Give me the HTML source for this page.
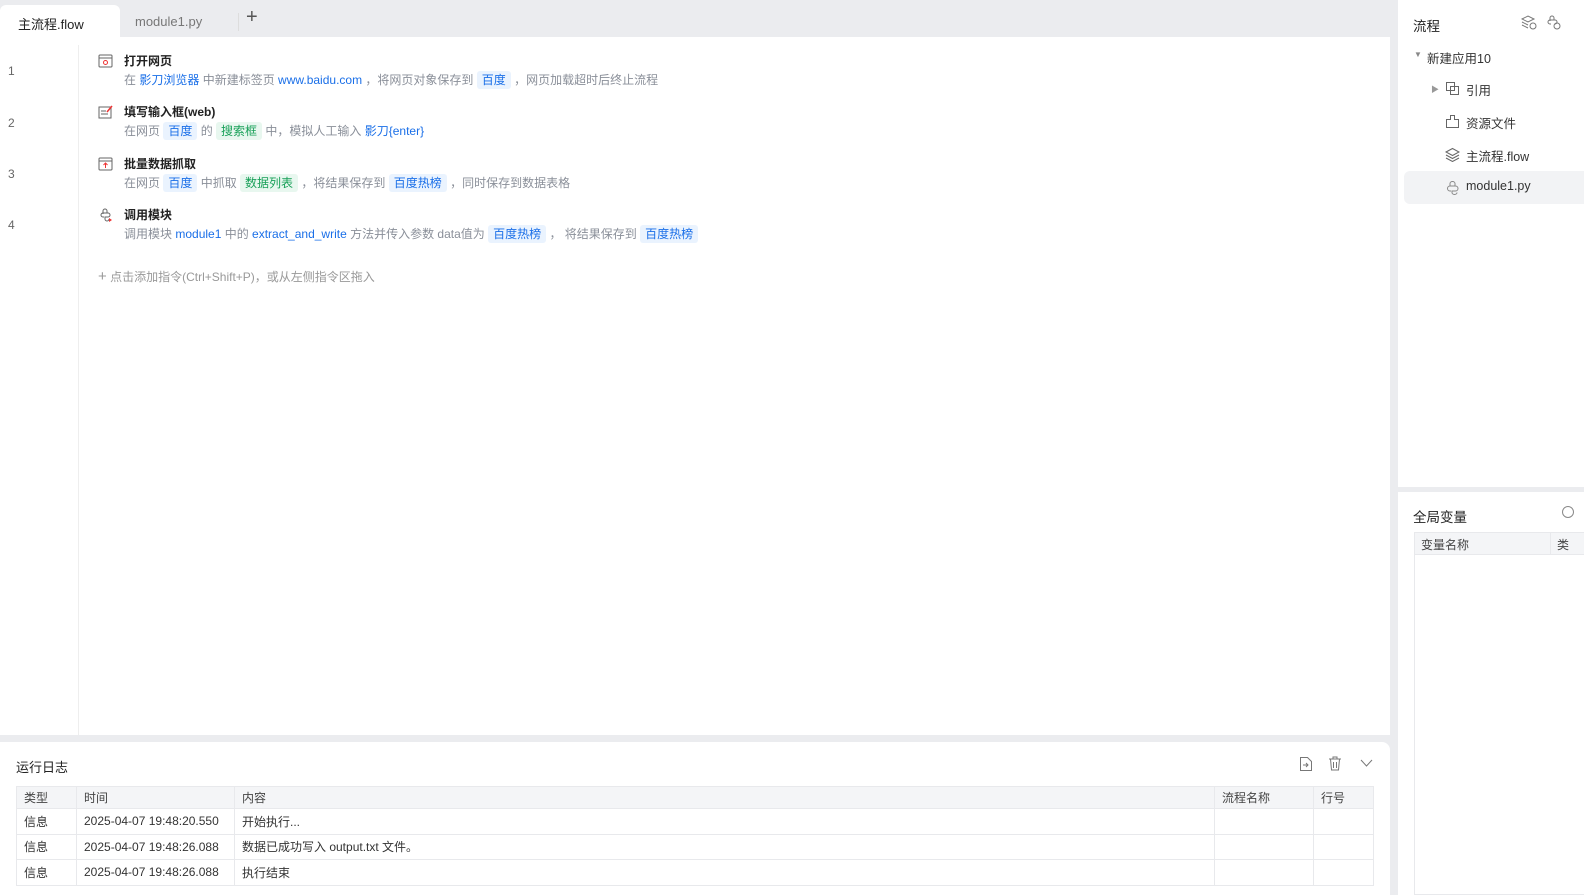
<!DOCTYPE html>
<html><head><meta charset="utf-8"><style>
*{margin:0;padding:0;box-sizing:border-box}
body{width:1584px;height:895px;overflow:hidden;background:#ebecef;font-family:"Liberation Sans","Noto Sans CJK SC",sans-serif;font-size:12px;color:#222;position:relative}
.abs{position:absolute}
.tab1{left:0;top:5px;width:120px;height:33px;background:#fff;border-radius:6px 6px 0 0;padding:9px 0 0 18px;font-size:13px;color:#222}
.tab2{left:135px;top:14px;font-size:13px;color:#777}
.editor{left:0;top:37px;width:1390px;height:698px;background:#fff}
.gutter{left:78px;top:45px;width:1px;height:690px;background:#eee}
.ln{left:8px;color:#666;font-size:12px}
.t{left:124px;font-size:12px;font-weight:bold;color:#222}
.d{left:124px;font-size:12px;color:#8a8f99;white-space:nowrap}
.b{color:#1a6fe8}
.tag{display:inline-block;padding:0 5px;border-radius:3px;background:#eaf3fe;color:#1a6fe8;line-height:18px}
.tg{background:#e8f7ef;color:#18a058}
.ic{left:98px;width:15px;height:14px}
.log{left:0;top:742px;width:1390px;height:153px;background:#fff;border-radius:0 8px 0 0}
table{border-collapse:collapse;font-size:12px}
td{border:1px solid #e8e9ec;height:25.5px;padding:0 7px;color:#333}
tr.h td{background:#f4f5f7;height:22px;color:#444}
.rp{left:1398px;top:0;width:186px;height:487px;background:#fff}
.rp2{left:1398px;top:492px;width:186px;height:403px;background:#fff}
.tr{font-size:12.5px;color:#333}
</style></head><body>
<div class="abs tab1">主流程.flow</div>
<div class="abs tab2">module1.py</div>
<div class="abs" style="left:238px;top:13px;width:1px;height:18px;background:#ddd"></div>
<div class="abs" style="left:246px;top:6px;font-size:20px;color:#555;font-weight:300">+</div>
<div class="abs editor"></div>
<div class="abs gutter"></div>
<div class="abs ln" style="top:64px">1</div>
<div class="abs ln" style="top:116px">2</div>
<div class="abs ln" style="top:167px">3</div>
<div class="abs ln" style="top:218px">4</div>

<svg class="abs ic" style="top:54px" viewBox="0 0 15 14"><rect x="1" y="1" width="13" height="12" rx="1" fill="none" stroke="#666"/><line x1="1" y1="4" x2="14" y2="4" stroke="#666"/><circle cx="7.5" cy="8.5" r="2" fill="none" stroke="#e33"/></svg>
<div class="abs t" style="top:52px">打开网页</div>
<div class="abs d" style="top:71px">在 <span class="b">影刀浏览器</span> 中新建标签页 <span class="b">www.baidu.com</span> ，将网页对象保存到 <span class="tag">百度</span> ，网页加载超时后终止流程</div>

<svg class="abs ic" style="top:105px" viewBox="0 0 15 14"><rect x="1" y="2" width="12" height="11" fill="none" stroke="#666"/><line x1="3" y1="6" x2="8" y2="6" stroke="#666"/><line x1="3" y1="9" x2="10" y2="9" stroke="#666"/><line x1="9" y1="7" x2="14" y2="1" stroke="#e33" stroke-width="1.5"/></svg>
<div class="abs t" style="top:103px">填写输入框(web)</div>
<div class="abs d" style="top:122px">在网页 <span class="tag">百度</span> 的 <span class="tag tg">搜索框</span> 中，模拟人工输入 <span class="b">影刀{enter}</span></div>

<svg class="abs ic" style="top:157px" viewBox="0 0 15 14"><rect x="1" y="1" width="13" height="12" rx="1" fill="none" stroke="#666"/><line x1="1" y1="4" x2="14" y2="4" stroke="#666"/><path d="M7.5 11V6M5.5 8l2-2 2 2" stroke="#e33" fill="none"/></svg>
<div class="abs t" style="top:155px">批量数据抓取</div>
<div class="abs d" style="top:174px">在网页 <span class="tag">百度</span> 中抓取 <span class="tag tg">数据列表</span> ，将结果保存到 <span class="tag">百度热榜</span> ，同时保存到数据表格</div>

<svg class="abs ic" style="top:208px" viewBox="0 0 15 14"><path d="M5 6V3a2 2 0 0 1 4 0v2H5a2 2 0 0 0 0 4h1M9 5h1a2 2 0 0 1 0 4H7v2a2 2 0 0 0 4 0" fill="none" stroke="#666"/><path d="M11 10l3 2-3 2z" fill="#e33"/></svg>
<div class="abs t" style="top:206px">调用模块</div>
<div class="abs d" style="top:225px">调用模块 <span class="b">module1</span> 中的 <span class="b">extract_and_write</span> 方法并传入参数 data值为 <span class="tag">百度热榜</span> ， 将结果保存到 <span class="tag">百度热榜</span></div>

<div class="abs d" style="left:98px;top:268px;color:#999"><span style="font-size:15px">+</span> 点击添加指令(Ctrl+Shift+P)，或从左侧指令区拖入</div>

<div class="abs log"></div>
<div class="abs" style="left:16px;top:757px;font-size:13px;color:#222">运行日志</div>
<svg class="abs" style="left:1299px;top:756px" width="14" height="16" viewBox="0 0 14 16"><path d="M1.5 1.5h7l4 4v9h-11z" fill="none" stroke="#777"/><path d="M4 9h5M7 7l2 2-2 2" fill="none" stroke="#777"/></svg>
<svg class="abs" style="left:1328px;top:756px" width="14" height="15" viewBox="0 0 14 15"><path d="M1 3h12M5 3V1h4v2M2.5 3l1 11h7l1-11M5.5 6v6M8.5 6v6" fill="none" stroke="#777"/></svg>
<svg class="abs" style="left:1360px;top:759px" width="13" height="9" viewBox="0 0 13 9"><path d="M1 1l5.5 6L12 1" fill="none" stroke="#777"/></svg>
<table class="abs" style="left:16px;top:786px;width:1358px">
<tr class="h"><td style="width:60px">类型</td><td style="width:158px">时间</td><td>内容</td><td style="width:99px">流程名称</td><td style="width:60px">行号</td></tr>
<tr><td>信息</td><td>2025-04-07 19:48:20.550</td><td>开始执行...</td><td></td><td></td></tr>
<tr><td>信息</td><td>2025-04-07 19:48:26.088</td><td>数据已成功写入 output.txt 文件。</td><td></td><td></td></tr>
<tr><td>信息</td><td>2025-04-07 19:48:26.088</td><td>执行结束</td><td></td><td></td></tr>
</table>

<div class="abs rp"></div>
<div class="abs" style="left:1413px;top:15px;font-size:13.5px;color:#222">流程</div>
<svg class="abs" style="left:1521px;top:15px" width="16" height="15" viewBox="0 0 16 15"><path d="M1 4l6-3 6 3-6 3zM1 7l6 3M1 10l6 3" fill="none" stroke="#777"/><circle cx="12" cy="11" r="3" fill="none" stroke="#777"/></svg>
<svg class="abs" style="left:1546px;top:15px" width="16" height="15" viewBox="0 0 16 15"><path d="M4 6V3a2 2 0 0 1 4 0v2H4a2 2 0 0 0 0 4h1M8 5h1a2 2 0 0 1 0 4" fill="none" stroke="#777"/><circle cx="11" cy="11" r="3" fill="none" stroke="#777"/></svg>
<div class="abs" style="left:1414px;top:50px;font-size:8px;color:#888">▼</div>
<div class="abs tr" style="left:1427px;top:48px">新建应用10</div>
<div class="abs" style="left:1431px;top:84px;font-size:8px;color:#999">▶</div>
<svg class="abs" style="left:1445px;top:81px" width="15" height="15" viewBox="0 0 15 15"><rect x="1.5" y="1.5" width="8" height="8" fill="none" stroke="#666"/><rect x="5.5" y="5.5" width="8" height="8" fill="none" stroke="#666"/></svg>
<div class="abs tr" style="left:1466px;top:80px">引用</div>
<svg class="abs" style="left:1445px;top:114px" width="15" height="15" viewBox="0 0 15 15"><path d="M1.5 5.5h4V1.5h4v4h4v8h-12z" fill="none" stroke="#666"/></svg>
<div class="abs tr" style="left:1466px;top:113px">资源文件</div>
<svg class="abs" style="left:1445px;top:147px" width="15" height="15" viewBox="0 0 15 15"><path d="M1 5l6.5-3.5L14 5 7.5 8.5zM1 8l6.5 3.5L14 8M1 11l6.5 3.5L14 11" fill="none" stroke="#666"/></svg>
<div class="abs tr" style="left:1466px;top:146px">主流程.flow</div>
<div class="abs" style="left:1404px;top:171px;width:180px;height:33px;background:#f2f3f5;border-radius:6px 0 0 6px"></div>
<svg class="abs" style="left:1445px;top:180px" width="15" height="15" viewBox="0 0 15 15"><path d="M5 6V3.5a2.5 2 0 0 1 5 0V6H5a2.5 2.5 0 0 0 0 5h1M10 6h.5a2.5 2.5 0 0 1 0 5H7v1.5a2.5 2 0 0 0 5 0" fill="none" stroke="#888"/></svg>
<div class="abs tr" style="left:1466px;top:179px">module1.py</div>

<div class="abs rp2"></div>
<div class="abs" style="left:1413px;top:506px;font-size:13.5px;color:#222">全局变量</div>
<div class="abs" style="left:1562px;top:506px;width:12px;height:12px;border:1px solid #888;border-radius:50%"></div>
<div class="abs" style="left:1414px;top:532px;width:170px;height:363px;border:1px solid #e8e9ec;border-right:none"></div>
<div class="abs" style="left:1415px;top:533px;width:169px;height:22px;background:#f4f5f7;border-bottom:1px solid #e8e9ec"></div>
<div class="abs" style="left:1421px;top:536px;color:#444">变量名称</div>
<div class="abs" style="left:1550px;top:533px;width:1px;height:22px;background:#e8e9ec"></div>
<div class="abs" style="left:1557px;top:536px;color:#444">类</div>
</body></html>
